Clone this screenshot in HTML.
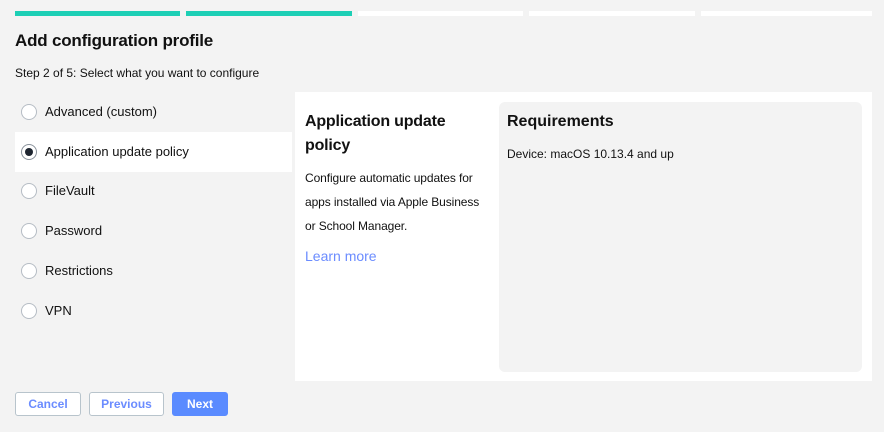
<!DOCTYPE html><html><head><style>
body{margin:0;width:884px;height:432px;background:#f3f3f3;font-family:"Liberation Sans",Arial,sans-serif;position:relative;overflow:hidden;color:#111}
.bar{position:absolute;top:11px;height:5px;background:#fff}
.on{background:#1dcfb5}
.a{position:absolute}
.r{position:absolute;left:15px;width:277px;height:40px;font-size:13px;line-height:40px}
.r i{position:absolute;left:6px;top:12px;width:14px;height:14px;border:1px solid #b5bcc4;border-radius:50%;background:#fff}
.r span{position:absolute;left:30px}
.btn{position:absolute;top:392px;height:22px;border:1px solid #b8c4cc;border-radius:3px;background:#fff;color:#6b8cff;font-size:12px;font-weight:bold;text-align:center;line-height:22px}
</style></head><body>
<div class="bar on" style="left:15px;width:165px"></div>
<div class="bar on" style="left:186px;width:166px"></div>
<div class="bar" style="left:358px;width:165px"></div>
<div class="bar" style="left:529px;width:166px"></div>
<div class="bar" style="left:701px;width:171px"></div>
<div class="a" style="left:15px;top:31px;font-size:17px;font-weight:bold;letter-spacing:-0.2px">Add configuration profile</div>
<div class="a" style="left:15px;top:66px;font-size:12px">Step 2 of 5: Select what you want to configure</div>
<div class="r" style="top:92px"><i></i><span>Advanced (custom)</span></div>
<div class="r" style="top:132px;background:#fff"><i style="border-color:#8a929c"><b style="position:absolute;left:3px;top:3px;width:8px;height:8px;border-radius:50%;background:#1e2530"></b></i><span>Application update policy</span></div>
<div class="r" style="top:171px"><i></i><span>FileVault</span></div>
<div class="r" style="top:211px"><i></i><span>Password</span></div>
<div class="r" style="top:251px"><i></i><span>Restrictions</span></div>
<div class="r" style="top:291px"><i></i><span>VPN</span></div>
<div class="a" style="left:295px;top:92px;width:577px;height:289px;background:#fff"></div>
<div class="a" style="left:305px;top:110px;width:180px;font-size:16px;font-weight:bold;line-height:24px;letter-spacing:-0.2px">Application update policy</div>
<div class="a" style="left:305px;top:166px;width:185px;font-size:12px;line-height:24px;letter-spacing:-0.1px">Configure automatic updates for apps installed via Apple Business or School Manager.</div>
<div class="a" style="left:305px;top:248px;font-size:14px;color:#6b8cff">Learn more</div>
<div class="a" style="left:499px;top:102px;width:363px;height:270px;background:#f3f3f3;border-radius:6px"></div>
<div class="a" style="left:507px;top:113px;font-size:16px;font-weight:bold">Requirements</div>
<div class="a" style="left:507px;top:147px;font-size:12px">Device: macOS 10.13.4 and up</div>
<div class="btn" style="left:15px;width:64px">Cancel</div>
<div class="btn" style="left:89px;width:73px">Previous</div>
<div class="btn" style="left:172px;width:54px;background:#5a8bff;border-color:#5a8bff;color:#fff">Next</div>
</body></html>
